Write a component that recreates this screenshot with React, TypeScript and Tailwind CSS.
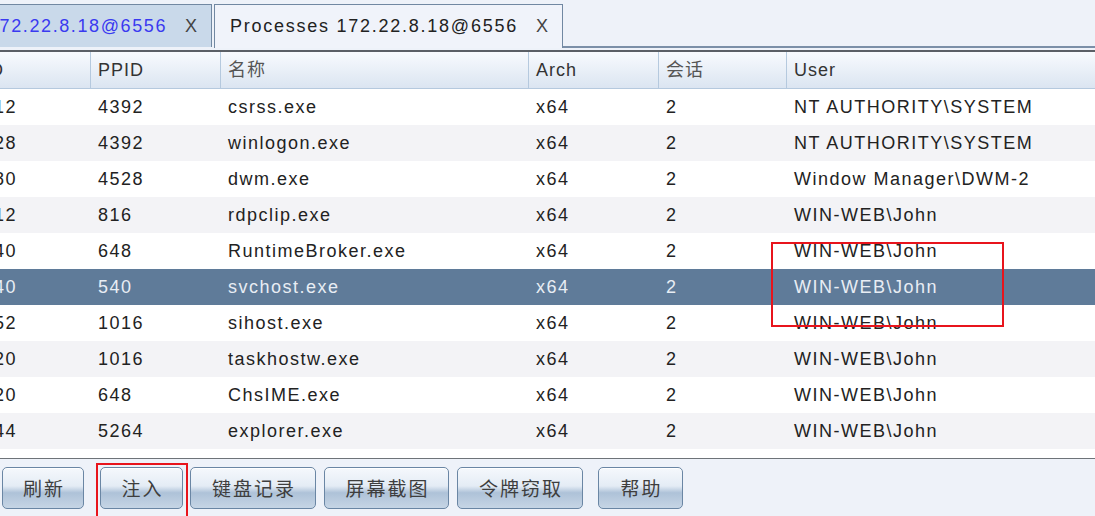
import { Fragment } from "react";

type Proc = { pid: string; ppid: string; name: string; arch: string; session: string; user: string };

const PROCS: Proc[] = [
  { pid: "5412", ppid: "4392", name: "csrss.exe", arch: "x64", session: "2", user: "NT AUTHORITY\\SYSTEM" },
  { pid: "4628", ppid: "4392", name: "winlogon.exe", arch: "x64", session: "2", user: "NT AUTHORITY\\SYSTEM" },
  { pid: "4780", ppid: "4528", name: "dwm.exe", arch: "x64", session: "2", user: "Window Manager\\DWM-2" },
  { pid: "5312", ppid: "816", name: "rdpclip.exe", arch: "x64", session: "2", user: "WIN-WEB\\John" },
  { pid: "5440", ppid: "648", name: "RuntimeBroker.exe", arch: "x64", session: "2", user: "WIN-WEB\\John" },
  { pid: "5540", ppid: "540", name: "svchost.exe", arch: "x64", session: "2", user: "WIN-WEB\\John" },
  { pid: "5652", ppid: "1016", name: "sihost.exe", arch: "x64", session: "2", user: "WIN-WEB\\John" },
  { pid: "5720", ppid: "1016", name: "taskhostw.exe", arch: "x64", session: "2", user: "WIN-WEB\\John" },
  { pid: "6020", ppid: "648", name: "ChsIME.exe", arch: "x64", session: "2", user: "WIN-WEB\\John" },
  { pid: "5344", ppid: "5264", name: "explorer.exe", arch: "x64", session: "2", user: "WIN-WEB\\John" },
];

const SELECTED = 5;

const COLS = ["PID", "PPID", "名称", "Arch", "会话", "User"];

const ACTIONS = [
  { label: "刷新", cls: "w-[82px] ml-[2px]" },
  { label: "注入", cls: "w-[83px] ml-[16px]" },
  { label: "键盘记录", cls: "w-[126px] ml-[7px]" },
  { label: "屏幕截图", cls: "w-[125px] ml-[8px]" },
  { label: "令牌窃取", cls: "w-[126px] ml-[8px]" },
  { label: "帮助", cls: "w-[85px] ml-[15px]" },
];

const grid = "grid grid-cols-[127px_130px_308px_130px_128px_1fr]";

export default function App() {
  return (
    <div
      className="relative w-[1095px] h-[516px] overflow-hidden bg-[#eef2f9] flex flex-col text-[18px] text-[#222]"
      style={{ fontFamily: '"Liberation Sans", "Noto Sans CJK SC", sans-serif' }}
    >
      {/* tab strip */}
      <div className="h-[48px] flex items-end shrink-0">
        <div className="-ml-[28px] h-[43px] w-[240px] flex items-center pl-[15px] pr-[14px] bg-[#c9d9ea] border border-b-0 border-[#7188a2] mb-px">
          <span className="text-[#3a3af0] tracking-[1.6px]">172.22.8.18@6556</span>
          <span className="ml-auto text-[#444]">X</span>
        </div>
        <div className="ml-[2px] h-[44px] w-[349px] flex items-center pl-[15px] pr-[14px] bg-[#f0f3fa] border border-b-0 border-[#7188a2]">
          <span className="tracking-[1.75px]">Processes 172.22.8.18@6556</span>
          <span className="ml-auto text-[#444]">X</span>
        </div>
        <div className="flex-1 border-b-2 border-[#7b8fa8]" />
      </div>

      {/* process table */}
      <div className="mt-[2px] flex-1 flex flex-col border-t-2 border-[#5b5f66] bg-white">
        <div className={`${grid} -ml-[36px] h-[37px] bg-gradient-to-b from-[#f8fafe] to-[#dbe5f1] border-b border-[#b5c9de]`}>
          {COLS.map((c, i) => (
            <div
              key={c}
              className={`flex items-center px-[7px] tracking-[1px] ${i < COLS.length - 1 ? "border-r border-[#b5c9de]" : ""} ${/[^\x00-\x7f]/.test(c) ? "text-[#555]" : "text-[#333]"}`}
            >
              {c}
            </div>
          ))}
        </div>
        <div className="flex-1">
          {PROCS.map((p, i) => {
            const sel = i === SELECTED;
            const bg = sel ? "bg-[#5f7b99] text-[#e8edf4]" : i % 2 === 1 || i === 9 ? "bg-[#f3f3f6]" : "bg-white";
            return (
              <div key={p.pid + p.name} className={`${grid} -ml-[36px] h-[36px] ${bg}`}>
                {[p.pid, p.ppid, p.name, p.arch, p.session, p.user].map((v, j) => (
                  <Fragment key={j}>
                    <div className="flex items-center px-[7px] whitespace-nowrap tracking-[1.5px]">{v}</div>
                  </Fragment>
                ))}
              </div>
            );
          })}
        </div>
      </div>

      {/* action buttons */}
      <div className="h-[58px] shrink-0 border-t border-[#6e7379] flex items-start pt-[8px] bg-[#eef2f9]">
        {ACTIONS.map((a) => (
          <button
            key={a.label}
            type="button"
            className={`${a.cls} h-[42px] rounded-[5px] border border-[#6a86a4] bg-[linear-gradient(to_bottom,#f5f8fc_0%,#e4ecf5_45%,#aec2d8_62%,#c6d5e5_100%)] text-[19px] text-[#3e3e3e] tracking-[2px] pl-[2px] shadow-[inset_0_1px_0_#ffffff]`}
            style={{ fontFamily: '"Noto Sans CJK SC", sans-serif' }}
          >
            {a.label}
          </button>
        ))}
      </div>

      {/* highlight marks */}
      <div className="absolute left-[771px] top-[242px] w-[233px] h-[85px] border-2 border-[#e8141c]" />
      <div className="absolute left-[96px] top-[463px] w-[92px] h-[60px] border-2 border-[#e8141c]" />
    </div>
  );
}
